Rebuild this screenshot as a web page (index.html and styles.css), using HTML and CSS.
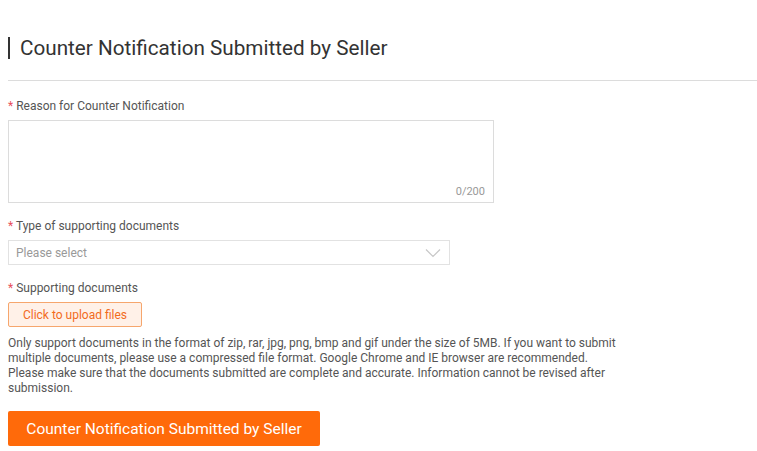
FILE: index.html
```html
<!DOCTYPE html>
<html lang="en">
<head>
    <meta charset="UTF-8">
    <title>Counter Notification</title>
    <link rel="stylesheet" href="styles.css">
</head>
<body>
    <div class="page">
        <h2 class="title">Counter Notification Submitted by Seller</h2>
        <div class="divider"></div>

        <div class="field">
            <label class="label"><span class="req">*</span> Reason for Counter Notification</label>
            <div class="textarea-box">
                <textarea class="textarea"></textarea>
                <span class="counter">0/200</span>
            </div>
        </div>

        <div class="field">
            <label class="label"><span class="req">*</span> Type of supporting documents</label>
            <div class="select">
                <span class="placeholder">Please select</span>
                <svg class="chevron" width="16" height="10" viewBox="0 0 16 10">
                    <path d="M1 1.5 L8 8.5 L15 1.5" fill="none" stroke="#c8c8c8" stroke-width="1.2"/>
                </svg>
            </div>
        </div>

        <div class="field">
            <label class="label"><span class="req">*</span> Supporting documents</label>
            <button class="upload-btn">Click to upload files</button>
            <p class="hint">Only support documents in the format of zip, rar, jpg, png, bmp and gif under the size of 5MB. If you want to submit multiple documents, please use a compressed file format. Google Chrome and IE browser are recommended. Please make sure that the documents submitted are complete and accurate. Information cannot be revised after submission.</p>
        </div>

        <button class="submit-btn">Counter Notification Submitted by Seller</button>
    </div>
</body>
</html>
```

FILE: styles.css
```css
body {
    margin: 0;
    background-color: #fff;
    font-family: Roboto, "Liberation Sans", sans-serif;
    color: #333;
}

.page {
    padding: 37px 0 0 8px;
}

.title {
    margin: 0;
    font-size: 20.7px;
    font-weight: 400;
    line-height: 22px;
    color: #333;
    border-left: 2px solid #333;
    padding-left: 10px;
}

.divider {
    height: 1px;
    background-color: #dcdcdc;
    margin: 21px 0 17px 0;
}

.field {
    margin-bottom: 15px;
}

.label {
    display: block;
    font-size: 12px;
    line-height: 16px;
    color: #555;
    margin-bottom: 6px;
}

.req {
    color: #e8505b;
}

.textarea-box {
    position: relative;
    width: 486px;
    height: 83px;
}

.textarea {
    box-sizing: border-box;
    width: 100%;
    height: 100%;
    border: 1px solid #dcdcdc;
    resize: none;
    margin: 0;
    display: block;
}

.counter {
    position: absolute;
    right: 9px;
    bottom: 5px;
    font-size: 11px;
    color: #999;
}

.select {
    box-sizing: border-box;
    width: 442px;
    height: 25px;
    border: 1px solid #e2e2e2;
    display: flex;
    align-items: center;
    justify-content: space-between;
    padding: 0 8px 0 7px;
}

.placeholder {
    font-size: 12px;
    color: #999;
}

.upload-btn {
    display: block;
    box-sizing: border-box;
    height: 25px;
    width: 134px;
    margin-top: 2px;
    background-color: #fff1e8;
    border: 1px solid #f6a66d;
    border-radius: 2px;
    color: #f26b1d;
    font-family: Roboto, "Liberation Sans", sans-serif;
    font-size: 12px;
    padding: 0;
}

.hint {
    margin: 9px 0 0 0;
    width: 612px;
    font-size: 12px;
    line-height: 15px;
    color: #555;
}

.submit-btn {
    margin-top: 0;
    height: 35px;
    width: 312px;
    background-color: #ff6a0a;
    border: none;
    border-radius: 2px;
    color: #fff;
    font-family: Roboto, "Liberation Sans", sans-serif;
    font-size: 15.5px;
    padding: 0;
}
```
